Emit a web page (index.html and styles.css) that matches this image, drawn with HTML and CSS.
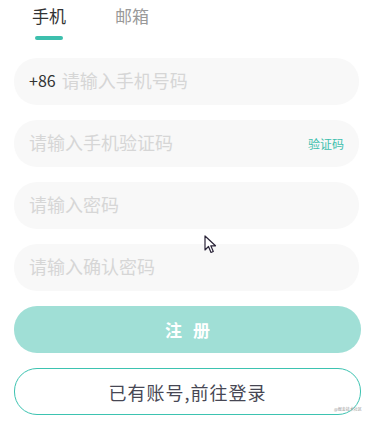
FILE: index.html
```html
<!DOCTYPE html>
<html lang="zh">
<head>
<meta charset="utf-8">
<title>注册</title>
<link rel="stylesheet" href="styles.css">
</head>
<body>
<div class="page">
  <div class="tabs">
    <div class="tab active"><span class="tab-label">手机</span><span class="tab-bar"></span></div>
    <div class="tab"><span class="tab-label">邮箱</span></div>
  </div>
  <div class="form">
    <div class="field"><span class="prefix">+86</span><span class="ph">请输入手机号码</span></div>
    <div class="field"><span class="ph">请输入手机验证码</span><span class="code">验证码</span></div>
    <div class="field"><span class="ph">请输入密码</span></div>
    <div class="field"><span class="ph">请输入确认密码</span></div>
    <div class="btn-primary">注册</div>
    <div class="btn-outline">已有账号,前往登录</div>
  </div>
  <svg class="cursor" width="13" height="19" viewBox="0 0 13 19"><path d="M1 1 L1 15 L4.5 11.5 L7 17.5 L9.3 16.5 L6.8 10.8 L11.5 10.8 Z" fill="#fff" stroke="#2a2438" stroke-width="1.2" stroke-linejoin="round"/></svg>
  <span class="mark">@掘金技术社区</span>
</div>
</body>
</html>
```

FILE: styles.css
```css
html, body {
  margin: 0;
  padding: 0;
  background: #fff;
}
body {
  font-family: "Noto Sans CJK SC", "Noto Sans", "Liberation Sans", sans-serif;
  width: 369px;
  height: 421px;
  overflow: hidden;
}
.page {
  position: relative;
  height: 421px;
}
.tabs {
  display: flex;
  gap: 49px;
  padding: 6px 0 0 32px;
}
.tab {
  display: flex;
  flex-direction: column;
  align-items: center;
}
.tab-label {
  font-size: 17px;
  line-height: 20px;
  color: #999;
}
.tab.active .tab-label {
  color: #333;
}
.tab-bar {
  display: block;
  width: 28px;
  height: 4px;
  border-radius: 2px;
  background: #3dbfad;
  margin-top: 10px;
}
.form {
  display: flex;
  flex-direction: column;
  gap: 15px;
  padding: 18px 8px 0 14px;
}
.field {
  width: 345px;
  height: 47px;
  box-sizing: border-box;
  border-radius: 23px;
  background: #f8f8f8;
  display: flex;
  align-items: center;
  padding: 0 15px 4px 15px;
  font-size: 18px;
}
.prefix {
  color: #333;
  font-size: 16px;
  margin-right: 6px;
}
.ph {
  color: #d6d6d6;
  flex: 1;
}
.code {
  font-size: 12px;
  color: #3dbfad;
  padding-top: 4px;
}
.btn-primary {
  height: 47px;
  border-radius: 23px;
  background: #a0dfd6;
  color: #fff;
  font-weight: bold;
  font-size: 17px;
  letter-spacing: 11px;
  padding-left: 11px;
  display: flex;
  align-items: center;
  justify-content: center;
}
.btn-outline {
  height: 47px;
  box-sizing: border-box;
  border: 1px solid #3dc3b1;
  border-radius: 23px;
  background: #fff;
  color: #474754;
  font-size: 18px;
  letter-spacing: 1px;
  display: flex;
  align-items: center;
  justify-content: center;
}
.cursor {
  position: absolute;
  left: 204px;
  top: 235px;
}
.mark {
  position: absolute;
  left: 334px;
  top: 406px;
  font-size: 4px;
  color: #999;
  white-space: nowrap;
}
```
